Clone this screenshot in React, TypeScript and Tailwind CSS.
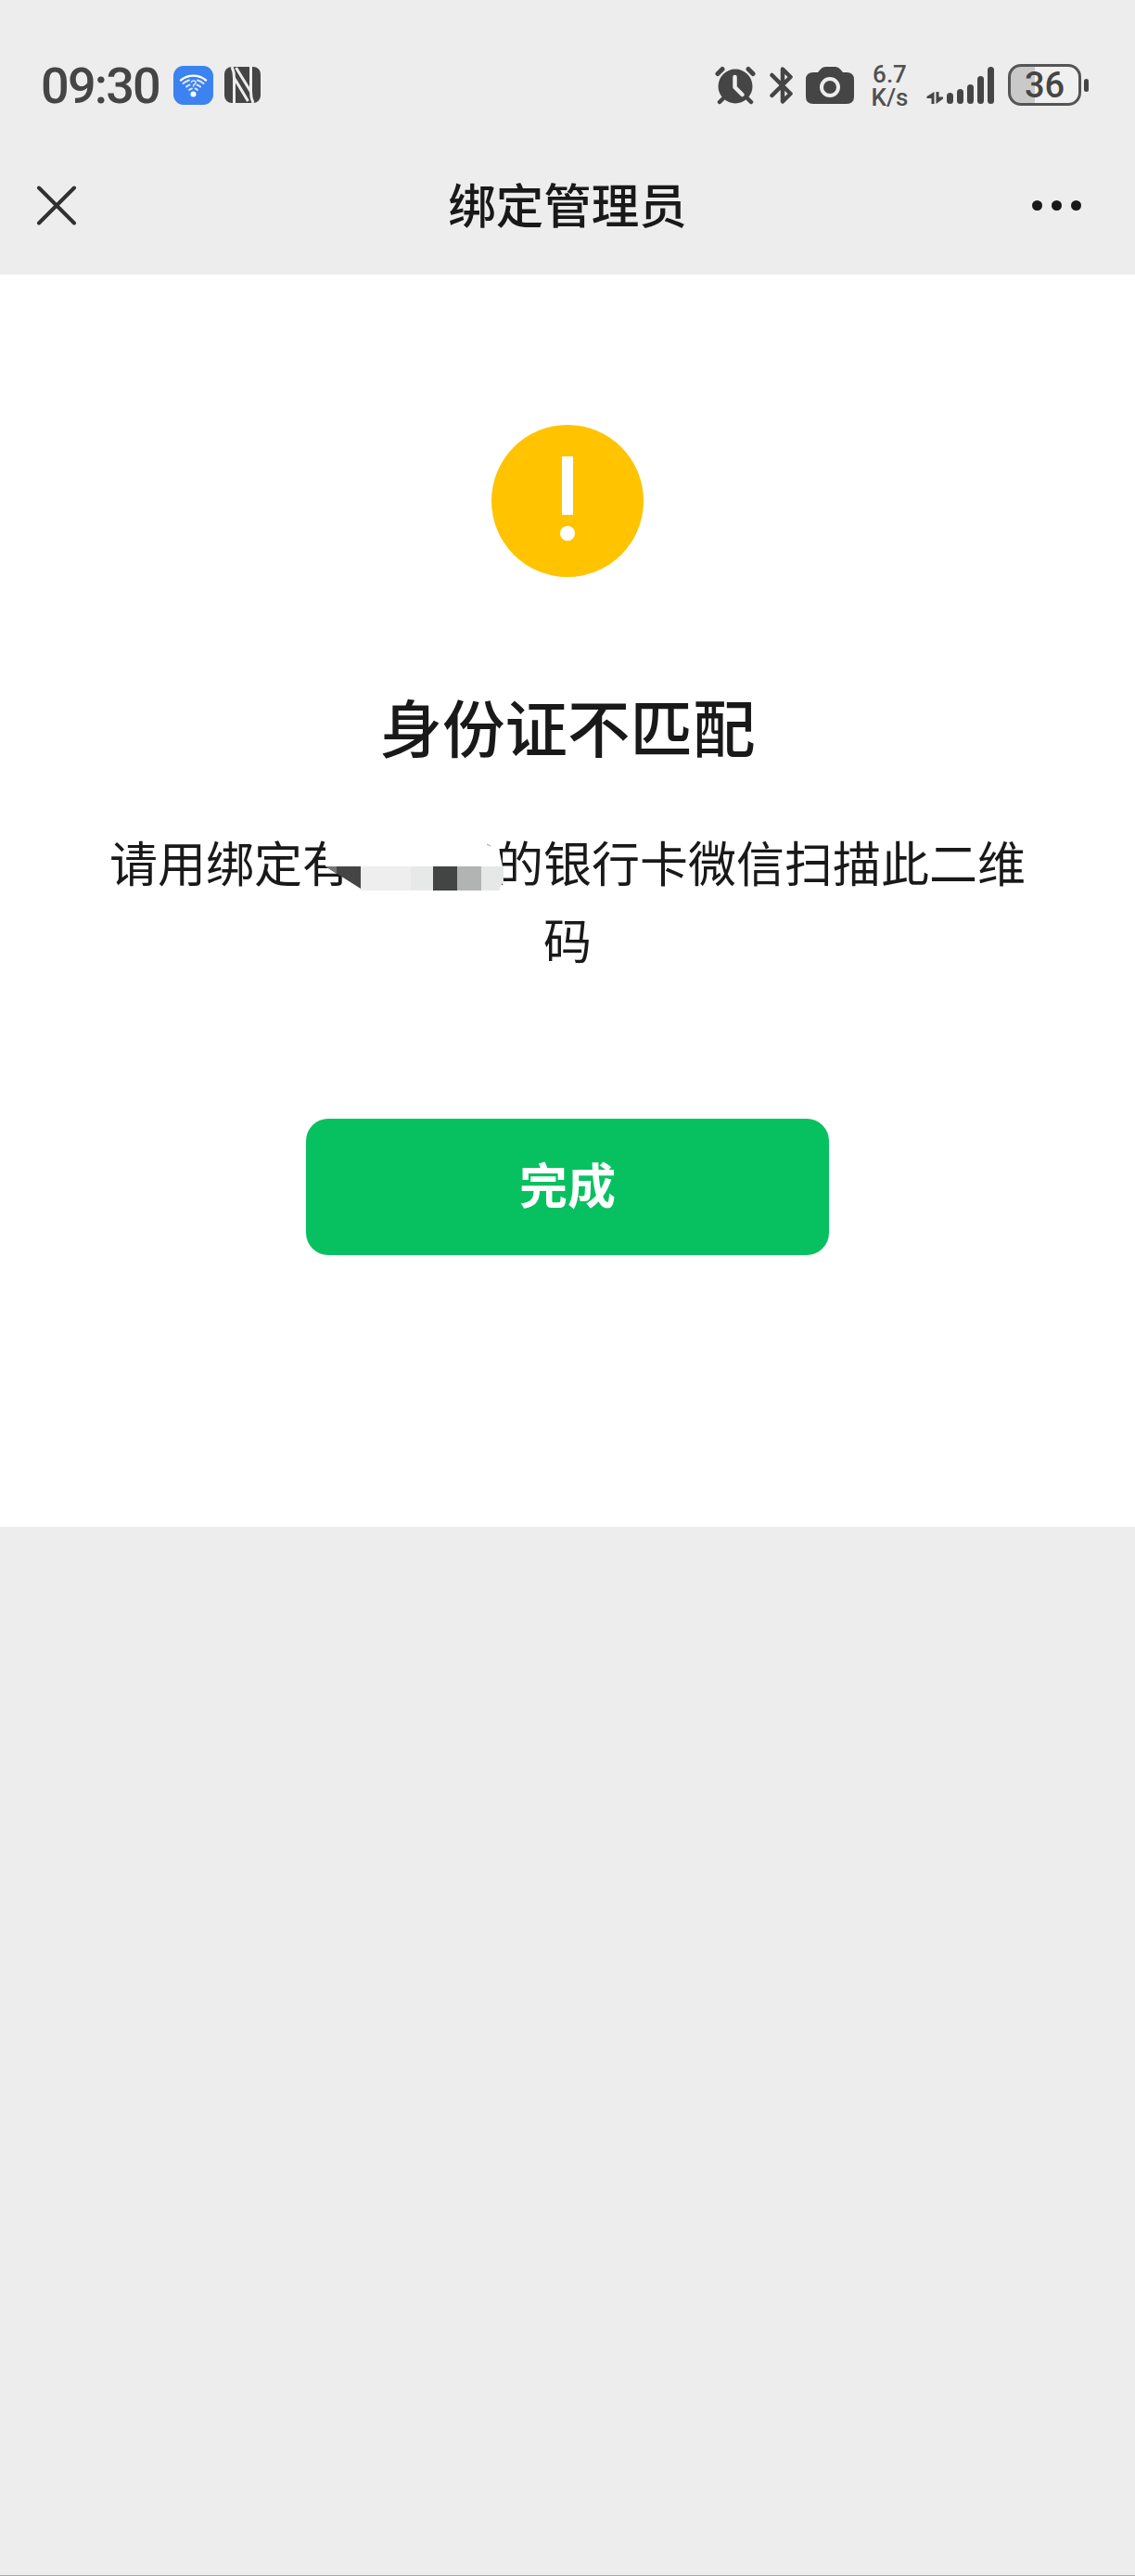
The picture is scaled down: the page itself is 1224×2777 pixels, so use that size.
const signalBars = [
  { x: 22, y: 29, h: 12 },
  { x: 33, y: 25, h: 16 },
  { x: 44, y: 20, h: 21 },
  { x: 55, y: 11, h: 30 },
  { x: 66, y: 1, h: 40 },
];

function WifiBadge() {
  return (
    <svg className="h-[42px] w-[43px]" viewBox="0 0 43 42" fill="none">
      <rect width="43" height="42" rx="11" fill="#3c82f0" />
      <g stroke="#fff" strokeLinecap="round">
        <path d="M8 15.500C15.500 9 27.500 9 35 15.500" strokeWidth="2.400" />
        <path d="M10.500 19C13 17 15 16 17 15.500M26 15.500C28 16 30 17 32.500 19" strokeWidth="2" opacity=".8" />
        <path d="M14 22.500C15 21.500 16 21 17.500 20.500M25.500 20.500C27 21 28 21.500 29 22.500" strokeWidth="2" opacity=".8" />
        <path d="M17 26C18 25 19 24.700 20 24.500M23.500 24.500C24.500 24.700 25 25 26 26" strokeWidth="1.800" opacity=".8" />
        <path d="M19.500 17.500C20 15.500 24 15.500 24 18C24 20 21.500 19.500 21.500 22" strokeWidth="1.600" opacity=".8" />
      </g>
      <circle cx="21.500" cy="30.500" r="3" fill="#fff" />
    </svg>
  );
}

function NfcIcon() {
  return (
    <svg className="h-[39px] w-[39px]" viewBox="0 0 39 39" fill="none">
      <rect width="39" height="39" rx="8" fill="#454545" />
      <path d="M10.500 39V12C10.500 7 9.500 3 8 0M10.500 12L25.500 37" stroke="#ededed" strokeWidth="3" />
      <path d="M28.500 0V27C28.500 32 29.500 36 31 39M28.500 27L12.500 1" stroke="#ededed" strokeWidth="3" />
    </svg>
  );
}

function AlarmIcon() {
  return (
    <svg className="h-[42px] w-[44px]" viewBox="0 0 44 42" fill="none" stroke="#454545" strokeLinecap="round">
      <circle cx="22" cy="22" r="18.500" fill="#454545" stroke="none" />
      <path d="M3 8.500L8 3.500M36 3.500L41 8.500" strokeWidth="5" />
      <path d="M8.500 35.500L5 39M35.500 35.500L39 39" strokeWidth="4.500" />
      <path d="M21.500 12V23L29.500 31" stroke="#ededed" strokeWidth="4.500" strokeLinejoin="round" />
    </svg>
  );
}

function BluetoothIcon() {
  return (
    <svg className="h-[42px] w-[26px]" viewBox="0 0 26 42" fill="none">
      <path
        d="M2.500 10L22.500 30L14 38.500V3.500L22.500 12L2.500 32"
        stroke="#454545"
        strokeWidth="4.500"
        strokeLinecap="round"
        strokeLinejoin="round"
      />
    </svg>
  );
}

function CameraIcon() {
  return (
    <svg className="h-[40px] w-[52px]" viewBox="0 0 52 40">
      <path
        d="M8 6H13L16 2.500Q18 0 21 0H32Q35 0 37 2.500L40 6H44Q52 6 52 14V32Q52 40 44 40H8Q0 40 0 32V14Q0 6 8 6Z"
        fill="#454545"
      />
      <circle cx="26" cy="22" r="9" fill="#454545" stroke="#ededed" strokeWidth="4" />
    </svg>
  );
}

function SignalIcon() {
  return (
    <svg className="h-[42px] w-[74px]" viewBox="0 0 74 42" fill="#454545">
      <path d="M8.500 28V41H5.500V35H0.500V33Z" />
      <path d="M10.500 28H13.500V33.500H18V35.500L10.500 41Z" />
      {signalBars.map((bar) => (
        <rect key={bar.x} x={bar.x} y={bar.y} width="7" height={bar.h} rx="3.500" />
      ))}
    </svg>
  );
}

function Battery() {
  return (
    <div className="flex items-center gap-[3px]">
      <div className="flex h-[45px] w-[79px] items-center justify-center rounded-[14px] border-[3px] border-[#555] bg-[linear-gradient(90deg,#c9c9c9_36%,#f0f0f0_36%)]">
        <span className="font-[Roboto] text-[38px] leading-none font-medium text-[#454545]">36</span>
      </div>
      <div className="h-[14px] w-[5px] rounded-full bg-[#454545]" />
    </div>
  );
}

function StatusBar() {
  return (
    <div className="flex h-[146px] items-start justify-between pt-[69px] pr-[50px] pl-[44px]">
      <div className="flex h-[45px] items-center">
        <span className="w-[143px] pt-[2px] font-[Roboto] text-[54px] leading-none font-medium tracking-[-1.800px] text-[#454545]">
          09:30
        </span>
        <WifiBadge />
        <div className="ml-[12px]">
          <NfcIcon />
        </div>
      </div>
      <div className="flex h-[45px] items-center">
        <AlarmIcon />
        <div className="ml-[15px]">
          <BluetoothIcon />
        </div>
        <div className="ml-[13px]">
          <CameraIcon />
        </div>
        <div className="ml-[17px] flex w-[43px] flex-col items-center pt-[2px] font-[Roboto] text-[26px] leading-[25px] font-medium text-[#505050]">
          <span>6.7</span>
          <span>K/s</span>
        </div>
        <div className="ml-[18px]">
          <SignalIcon />
        </div>
        <div className="ml-[14px]">
          <Battery />
        </div>
      </div>
    </div>
  );
}

function NavBar() {
  return (
    <div className="flex h-[150px] items-center justify-between pr-[58px] pl-[39px]">
      <svg className="h-[44px] w-[128px]" viewBox="0 0 128 44">
        <path d="M3 3.500L41 41.500M41 3.500L3 41.500" stroke="#303030" strokeWidth="4" strokeLinecap="round" />
      </svg>
      <h1 className="pb-1 text-[51.500px] leading-none font-medium text-[#191919]">绑定管理员</h1>
      <div className="flex w-[109px] justify-end gap-[10px] pt-px">
        <span className="h-[11px] w-[11px] rounded-full bg-[#191919]" />
        <span className="h-[11px] w-[11px] rounded-full bg-[#191919]" />
        <span className="h-[11px] w-[11px] rounded-full bg-[#191919]" />
      </div>
    </div>
  );
}

// Mosaic that hides the account holder's name
function NameMask() {
  return (
    <svg className="absolute top-[13px] left-[239px] h-[62px] w-[193px]" viewBox="0 0 193 62">
      <path d="M0 0H184L191 34H0Z" fill="#fff" />
      <path d="M18 48L38 58V62H18Z" fill="#fff" />
      <path d="M0 34H12V41.600Z" fill="#777" />
      <path d="M0 34H38V58Z" fill="#454545" />
      <path d="M0 34H12V41.600Z" fill="#777" />
      <path d="M38 34H92V60H38Z" fill="#eeeeee" />
      <path d="M92 34H116V60H92Z" fill="#e7e9e8" />
      <path d="M116 34H142V60H116Z" fill="#424543" />
      <path d="M142 34H168V60H142Z" fill="#b1b4b2" />
      <path d="M168 34H191L192 50L187 60H168Z" fill="#e5e8e7" />
      <path d="M174 10L178 12" stroke="#999" strokeWidth="1" />
    </svg>
  );
}

export default function App() {
  return (
    <div className="flex h-[2777px] w-[1224px] flex-col border-b border-[#a8a8a8] bg-[#ededed] font-['Noto_Sans_CJK_SC',sans-serif]">
      <header>
        <StatusBar />
        <NavBar />
      </header>

      <main className="flex h-[1350px] flex-col items-center bg-white pt-[162px]">
        <svg className="h-[164px] w-[164px]" viewBox="0 0 164 164">
          <circle cx="82" cy="82" r="82" fill="#ffc300" />
          <rect x="76" y="34" width="12" height="63" fill="#fff" />
          <circle cx="82" cy="117" r="8" fill="#fff" />
        </svg>

        <h2 className="mt-[110px] text-[67.500px] leading-[100px] font-medium text-[#191919]">身份证不匹配</h2>

        <div className="relative mt-[55px] w-[1000px] text-center text-[52px] leading-[83px] text-[#191919]">
          <p>
            请用绑定有
            <span className="inline-block w-[156px]" />
            的银行卡微信扫描此二维码
          </p>
          <NameMask />
        </div>

        <button className="mt-[153px] h-[147px] w-[564px] rounded-[24px] bg-[#07c160] pb-[8px] text-[52px] font-bold text-white">
          完成
        </button>
      </main>
    </div>
  );
}
